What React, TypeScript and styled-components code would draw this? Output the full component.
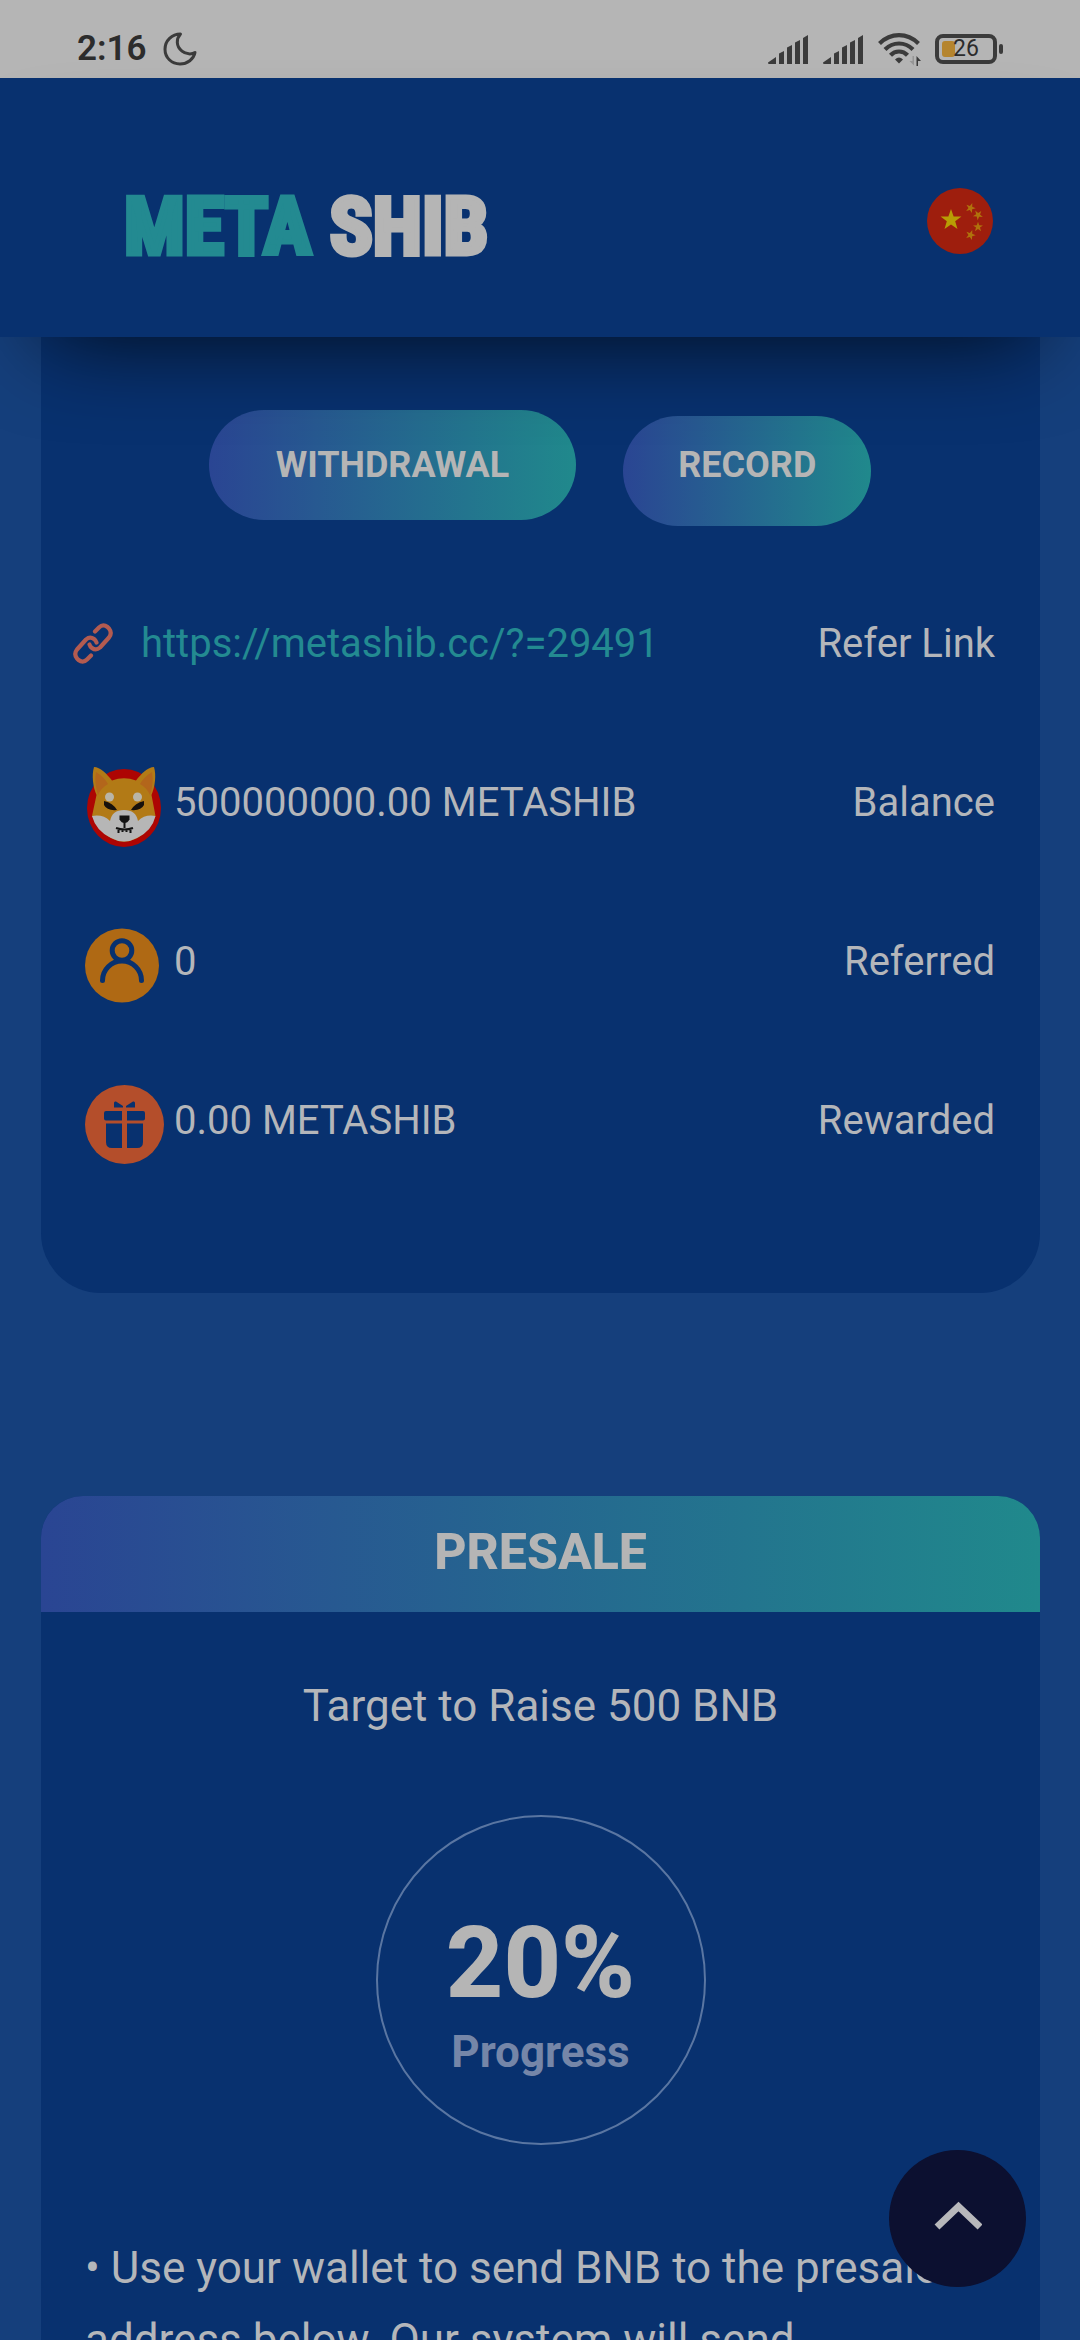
import React from "react";
import styled, { createGlobalStyle } from "styled-components";

const color = {
  card: "#08316f",
  page: "#153f7c",
  text: "#b4b6ba",
  title: "#b5b5b5",
  teal: "#238a91",
  ink: "#3b3b3b",
};

const brandGradient = "linear-gradient(90deg, #2a4593, #20898c)";

const GlobalStyle = createGlobalStyle`
  *, *::before, *::after { box-sizing: border-box; }
  body {
    margin: 0;
    background: ${color.page};
    color: ${color.text};
    font-family: Roboto, "Noto Sans", sans-serif;
  }
  svg { display: block; flex: none; }
  button { border: 0; padding: 0; font: inherit; color: inherit; cursor: pointer; }
`;

const Screen = styled.div`
  height: 100vh;
  overflow: hidden;
  display: flex;
  flex-direction: column;
`;

const StatusBar = styled.div`
  flex: none;
  display: flex;
  align-items: center;
  justify-content: space-between;
  height: 78px;
  padding: 20px 77px 0 77px;
  background: #b5b5b5;
  color: #2c2c2c;
`;

const StatusGroup = styled.div<{ $gap: number }>`
  display: flex;
  align-items: center;
  gap: ${(p) => p.$gap}px;
`;

const Clock = styled.span`
  font-size: 35px;
  font-weight: 600;
  line-height: 40px;
`;

const Battery = styled.span`
  display: flex;
  align-items: center;
  height: 30px;
`;

const BatteryCell = styled.span`
  display: flex;
  align-items: center;
  width: 62px;
  height: 30px;
  padding-left: 3px;
  border: 4px solid ${color.ink};
  border-radius: 8px;
  font-size: 23px;
  line-height: 24px;

  &::before {
    content: "";
    width: 13px;
    height: 16px;
    margin-right: -2px;
    border-radius: 3px;
    background: #b5852f;
  }
`;

const BatteryTip = styled.span`
  width: 4px;
  height: 10px;
  margin-left: 2px;
  border-radius: 2px;
  background: ${color.ink};
`;

const Header = styled.header`
  flex: none;
  position: relative;
  z-index: 1;
  display: flex;
  align-items: center;
  justify-content: space-between;
  height: 259px;
  padding: 26px 87px 0 124px;
  background: ${color.card};
  box-shadow: 0 45px 90px -45px rgba(0, 0, 0, 0.8);
`;

const Logo = styled.h1`
  margin: 0;
  padding-top: 12px;
  font-family: Impact, "Liberation Sans Narrow", "Roboto Condensed", Roboto, sans-serif;
  font-size: 80px;
  font-weight: 700;
  line-height: 88px;
  white-space: nowrap;
  color: ${color.title};
  -webkit-text-stroke: 5px currentColor;
`;

const LogoAccent = styled.span`
  color: ${color.teal};
`;

const LanguageButton = styled.button`
  width: 66px;
  height: 66px;
  border-radius: 50%;
  background: none;
`;

const Main = styled.main`
  display: flex;
  flex-direction: column;
  gap: 203px;
  padding: 0 40px 0 41px;
`;

const AccountCard = styled.section`
  padding: 73px 45px 93px 44px;
  background: ${color.card};
  border-radius: 0 0 60px 60px;
`;

const Actions = styled.div`
  display: flex;
  align-items: flex-start;
  justify-content: center;
  gap: 47px;
  margin-bottom: 38px;
`;

const PillButton = styled.button<{ $padding: number; $lowered?: boolean }>`
  height: 110px;
  margin-top: ${(p) => (p.$lowered ? 6 : 0)}px;
  padding: 0 ${(p) => p.$padding}px ${(p) => (p.$lowered ? 12 : 0)}px;
  border-radius: 55px;
  background: ${brandGradient};
  color: ${color.title};
  font-size: 36px;
  font-weight: 700;
`;

const Row = styled.div`
  display: flex;
  align-items: center;
  justify-content: space-between;
  height: 159px;
  font-size: 40px;
  line-height: 48px;
`;

const RowValue = styled.div`
  display: flex;
  align-items: center;
`;

const IconCell = styled.span`
  width: 89px;
  padding-top: 8px;
`;

const ReferLink = styled.a`
  display: flex;
  align-items: center;
  gap: 28px;
  margin-left: -12px;
  color: ${color.teal};
  text-decoration: none;
`;

const PresaleCard = styled.section`
  background: ${color.card};
  border-radius: 42px 42px 0 0;
  overflow: hidden;
`;

const PresaleTitle = styled.h2`
  display: flex;
  align-items: center;
  justify-content: center;
  height: 116px;
  margin: 0;
  padding-bottom: 4px;
  background: ${brandGradient};
  color: ${color.title};
  font-size: 50px;
  font-weight: 800;
`;

const PresaleBody = styled.div`
  display: flex;
  flex-direction: column;
  align-items: center;
  padding: 58px 44px;
  font-size: 44px;
  line-height: 72px;
`;

const Target = styled.p`
  margin: 0 0 73px;
`;

const ProgressRing = styled.div`
  display: flex;
  flex-direction: column;
  align-items: center;
  justify-content: center;
  width: 330px;
  height: 330px;
  margin-bottom: 87px;
  padding-top: 34px;
  border: 2px solid #5a76a2;
  border-radius: 50%;
`;

const ProgressValue = styled.strong`
  color: ${color.title};
  font-size: 100px;
  font-weight: 800;
  line-height: 110px;
`;

const ProgressLabel = styled.strong`
  color: #7586a8;
  font-size: 44px;
  line-height: 68px;
`;

const Instructions = styled.p`
  align-self: stretch;
  margin: 0;
`;

const TopButton = styled.button`
  position: fixed;
  right: 54px;
  bottom: 53px;
  z-index: 2;
  display: grid;
  place-items: center;
  width: 137px;
  height: 137px;
  padding-bottom: 6px;
  border-radius: 50%;
  background: #0c1030;
`;

const MoonIcon = () => (
  <svg width="34" height="34" viewBox="0 0 34 34" fill="none" stroke={color.ink} strokeWidth="3" strokeLinejoin="round" aria-hidden="true">
    <path d="M17.5 2C9 2 2 8.500 2 17.200 2 25.700 8.600 32 17 32c7.400 0 13.800-4.900 15-11.400-3 1.800-9 2-13-1.400C13 14.200 13 7 17.500 2Z" />
  </svg>
);

const SignalIcon = () => (
  <svg width="41" height="29" viewBox="0 0 41 29" fill={color.ink} aria-hidden="true">
    <path d="M0 27.500 8 22v7H1q-1 0-1-1.500ZM11 18.500 16 16v13h-5ZM19 12.500 24 10v19h-5ZM27 7.500 32 5v24h-5ZM35 3 40 0v29h-5Z" />
  </svg>
);

const WifiIcon = () => (
  <svg width="43" height="33" viewBox="0 0 43 33" fill="none" aria-hidden="true">
    <g stroke={color.ink} strokeWidth="4.200">
      <path d="M1.500 10.500Q10 2.200 21 2.200T40.500 10.500" />
      <path d="M7 16.500Q13 10.500 21 10.500T35 16.500" />
      <path d="M12.500 22.200Q16 18.500 21 18.500T29.500 22.200" />
    </g>
    <path d="M17 26.500Q21 22.500 25 26.500L21 30.500Z" fill={color.ink} />
    <path d="M36 23v9.500L31.500 28H34.500V23Z" fill="#969696" />
    <path d="M38.500 33V23l4.500 5h-3v5Z" fill={color.ink} />
  </svg>
);

const star = "M0-10 2.400-3.200 9.500-3.100 3.800 1.200 5.900 8.100 0 4-5.900 8.100-3.800 1.200-9.500-3.100-2.400-3.200Z";

const FlagIcon = () => (
  <svg width="66" height="66" viewBox="0 0 66 66" aria-hidden="true">
    <circle cx="33" cy="33" r="33" fill="#9e1e0d" />
    <path d={star} fill="#b89d05" transform="translate(24 32) scale(1.100)" />
    {[
      [43.500, 20, 20],
      [51, 27, 40],
      [51, 39, 0],
      [43.500, 47, 20],
    ].map(([x, y, turn]) => (
      <path key={y} d={star} fill="#b0720c" transform={`translate(${x} ${y}) rotate(${turn}) scale(0.520)`} />
    ))}
  </svg>
);

const ChainIcon = () => (
  <svg width="40" height="41" viewBox="0 0 40 41" fill="none" stroke="#b35b50" strokeWidth="4.200" strokeLinecap="round" strokeLinejoin="round" aria-hidden="true">
    <path d="M22 8.500 26 4.500Q30 .500 34.500 4L36 5.500Q39.500 10 36 14.500L27 24.500Q23 28 19 25 17 23.500 16.500 21.500" />
    <path d="M18 32.500 14 36.500Q10 40.500 5.500 37L4 35.500Q.500 31 4 26.500L13 16.500Q17 13 21 16 23 17.500 23.500 19.500" />
  </svg>
);

const ShibaIcon = () => (
  <svg width="76" height="80" viewBox="-2 0 76 80" aria-hidden="true">
    <ellipse cx="37" cy="41" rx="37" ry="39" fill="#ad0503" />
    <path d="M7 0C13 0 20 7 25 13.500Q37 9 49 13.500C54 7 61 0 67 0 69.500 8 68 20 64.500 28L68.500 49Q61 67 47 72.500 37 77 27 72.500 13 67 5 49L9.500 28C6 20 4.500 8 7 0Z" fill="#b27a16" />
    <path d="M9 5Q17 10 21 17 14 21 11 28 7 16 9 5ZM65 5Q57 10 53 17 60 21 63 28 67 16 65 5Z" fill="#b3661b" />
    <path d="M5 49Q16 47 23 54 25 43 37 43T51 54Q58 47 68.500 49 65 64 50 71 37 78 24 71 9 64 5 49Z" fill="#b6b6b6" />
    <circle cx="22.500" cy="30" r="4.500" fill="#b9b5a8" />
    <circle cx="50.500" cy="30" r="4.500" fill="#b9b5a8" />
    <path d="M17 34Q26 36 30 43 20 44 17 38ZM57 34Q48 36 44 43 54 44 57 38Z" fill="#17110c" />
    <path d="M32.500 48.500h10v4q-2 3.500-5 3.500t-5-3.500Z" fill="#131313" />
    <path d="M37.500 54v7M29 61Q37.500 64 46 61M31.500 62v4M35.500 62v3M39.500 62v3M43.500 62v4" stroke="#131313" strokeWidth="2" fill="none" />
  </svg>
);

const PersonIcon = () => (
  <svg width="74" height="75" viewBox="0 0 74 75" fill="none" stroke={color.card} strokeWidth="5" strokeLinecap="round" aria-hidden="true">
    <circle cx="37" cy="37.500" r="37" fill="#af6914" stroke="none" />
    <circle cx="37" cy="22.500" r="9.800" />
    <path d="M17.500 52.500A19.500 19.500 0 0 1 56.500 52.500" />
  </svg>
);

const GiftIcon = () => (
  <svg width="79" height="79" viewBox="0 0 79 79" fill={color.card} aria-hidden="true">
    <circle cx="39.500" cy="39.500" r="39.500" fill="#b44e2b" />
    <path d="M21 26H37v9.500H21q-2 0-2-2V28q0-2 2-2ZM42 26H58q2 0 2 2v5.500q0 2-2 2H42ZM21 38.500H37V63H27q-6 0-6-6ZM42 38.500H58V57q0 6-6 6H42ZM29 18q0-2 2-1.500L38 21v1.500H29ZM50 18q0-2-2-1.500L41 21v1.500h9Z" />
  </svg>
);

const ChevronUpIcon = () => (
  <svg width="48" height="30" viewBox="0 0 48 30" fill="none" stroke="#b8b8bb" strokeWidth="7" aria-hidden="true">
    <path d="M3 26 24.500 5.500 46 26" strokeLinejoin="miter" />
  </svg>
);

const stats = [
  { label: "Balance", value: "500000000.00 METASHIB", Icon: ShibaIcon },
  { label: "Referred", value: "0", Icon: PersonIcon },
  { label: "Rewarded", value: "0.00 METASHIB", Icon: GiftIcon },
];

export default function App() {
  return (
    <Screen>
      <GlobalStyle />
      <StatusBar>
        <StatusGroup $gap={16}>
          <Clock>2:16</Clock>
          <MoonIcon />
        </StatusGroup>
        <StatusGroup $gap={14}>
          <SignalIcon />
          <SignalIcon />
          <WifiIcon />
          <Battery>
            <BatteryCell>26</BatteryCell>
            <BatteryTip />
          </Battery>
        </StatusGroup>
      </StatusBar>

      <Header>
        <Logo>
          <LogoAccent>META</LogoAccent> SHIB
        </Logo>
        <LanguageButton type="button" aria-label="Language">
          <FlagIcon />
        </LanguageButton>
      </Header>

      <Main>
        <AccountCard>
          <Actions>
            <PillButton type="button" $padding={67}>WITHDRAWAL</PillButton>
            <PillButton type="button" $padding={55} $lowered>RECORD</PillButton>
          </Actions>
          <Row>
            <ReferLink href="#refer">
              <ChainIcon />
              https://metashib.cc/?=29491
            </ReferLink>
            <span>Refer Link</span>
          </Row>
          {stats.map(({ label, value, Icon }) => (
            <Row key={label}>
              <RowValue>
                <IconCell>
                  <Icon />
                </IconCell>
                {value}
              </RowValue>
              <span>{label}</span>
            </Row>
          ))}
        </AccountCard>

        <PresaleCard>
          <PresaleTitle>PRESALE</PresaleTitle>
          <PresaleBody>
            <Target>Target to Raise 500 BNB</Target>
            <ProgressRing>
              <ProgressValue>20%</ProgressValue>
              <ProgressLabel>Progress</ProgressLabel>
            </ProgressRing>
            <Instructions>
              • Use your wallet to send BNB to the presale address below. Our system will send
            </Instructions>
          </PresaleBody>
        </PresaleCard>
      </Main>

      <TopButton type="button" aria-label="Back to top">
        <ChevronUpIcon />
      </TopButton>
    </Screen>
  );
}
